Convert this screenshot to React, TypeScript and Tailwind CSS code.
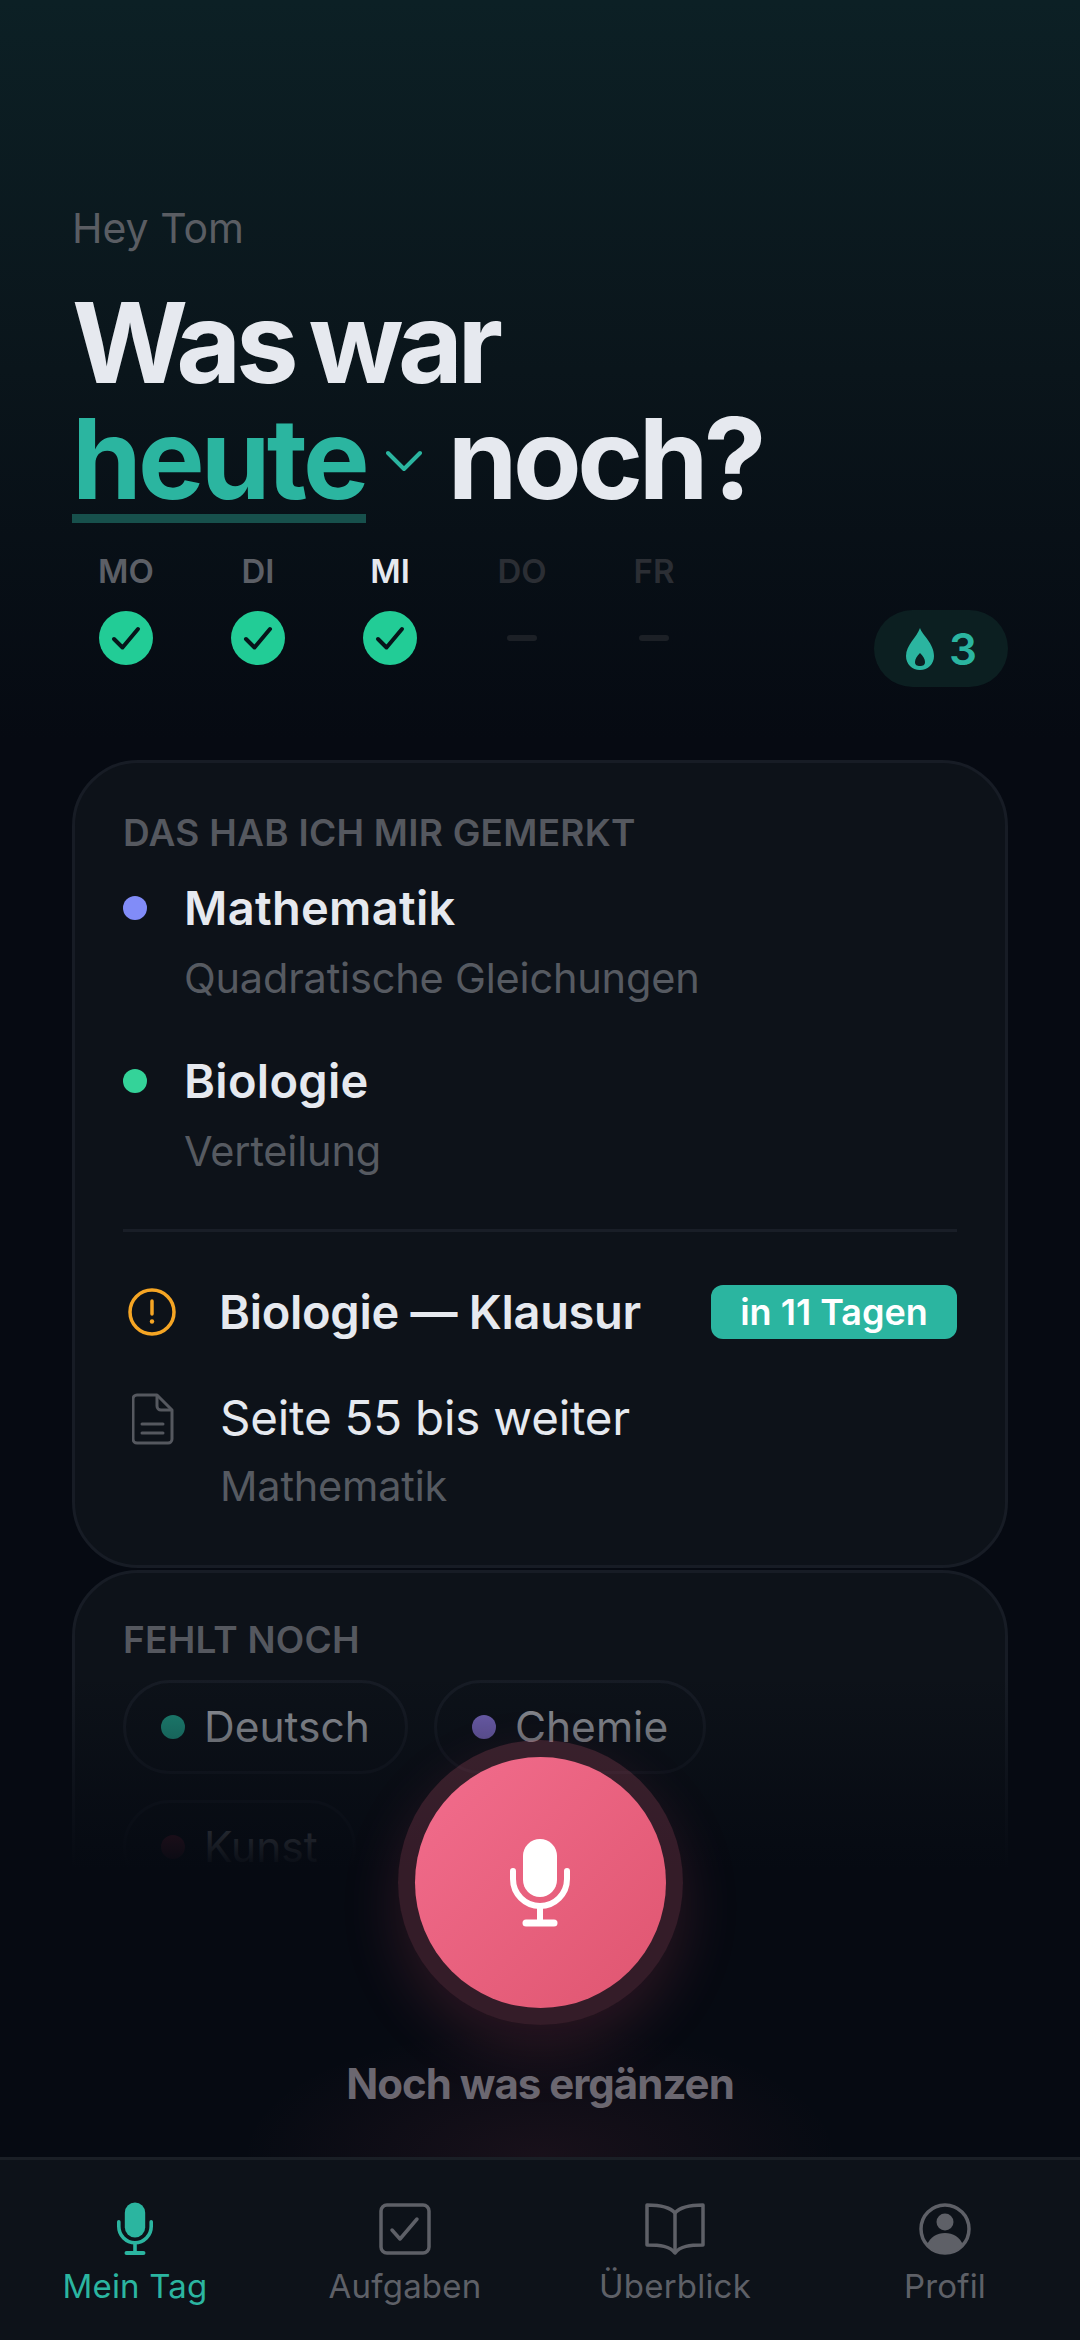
import type { ReactNode } from "react";

const FONT = "font-['Inter','Noto_Sans',sans-serif]";

const DAYS = [
  { label: "MO", state: "done" },
  { label: "DI", state: "done" },
  { label: "MI", state: "today" },
  { label: "DO", state: "open" },
  { label: "FR", state: "open" },
];

const MicIcon = ({ className }: { className: string }) => (
  <svg viewBox="0 0 60 88" className={className} fill="none">
    <rect x="13" y="0" width="34" height="58" rx="17" fill="currentColor" />
    <path d="M3 32v8a27 27 0 0 0 54 0v-8" stroke="currentColor" strokeWidth="6" strokeLinecap="round" />
    <path d="M30 67v16" stroke="currentColor" strokeWidth="6" />
    <path d="M16 84h28" stroke="currentColor" strokeWidth="7" strokeLinecap="round" />
  </svg>
);

const CheckBadge = () => (
  <svg viewBox="0 0 54 54" className="w-[54px] h-[54px]">
    <circle cx="27" cy="27" r="27" fill="#22cc96" />
    <path d="M15 28l8.500 8.500L39 18" fill="none" stroke="#07141a" strokeWidth="4" strokeLinecap="round" strokeLinejoin="round" />
  </svg>
);

const Subject = ({ dot, title, sub }: { dot: string; title: string; sub: string }) => (
  <div className="flex">
    <div className="w-[61px] h-[62px] flex items-center">
      <span className={`w-6 h-6 rounded-full ${dot}`} />
    </div>
    <div>
      <div className="h-[62px] leading-[62px] text-[47px] font-semibold text-[#e6e9ef] tracking-[0.3px]">{title}</div>
      <div className="mt-2 h-[62px] leading-[62px] text-[41.500px] text-[#565a61] tracking-[-0.2px]">{sub}</div>
    </div>
  </div>
);

const Chip = ({ dot, text, textColor }: { dot: string; text: string; textColor: string }) => (
  <div className="h-[94px] px-[35px] rounded-full border-[3px] border-[#171c25] flex items-center gap-[19px]">
    <span className={`w-6 h-6 rounded-full ${dot}`} />
    <span className={`text-[42.500px] ${textColor}`}>{text}</span>
  </div>
);

const NavItem = ({ icon, label, active }: { icon: ReactNode; label: string; active?: boolean }) => (
  <div className={`flex flex-col items-center ${active ? "text-[#2bb5a0]" : "text-[#5e6067]"}`}>
    <div className="h-[54px] flex items-center justify-center">{icon}</div>
    <span className="mt-[10px] text-[33px] leading-[40px] tracking-[0.2px]">{label}</span>
  </div>
);

export default function App() {
  return (
    <div className={`w-full h-[2340px] flex flex-col overflow-hidden bg-[#060a12] ${FONT}`}>
      <main className="relative flex-1 min-h-0 overflow-hidden px-[72px] pt-[200px] bg-gradient-to-b from-[#0c2025] via-[#0a151b] via-50% to-[#060a12] bg-[length:100%_740px] bg-no-repeat">
        <p className="text-[41px] leading-[56px] text-[#5a5d63]">Hey Tom</p>

        <h1 className="mt-[28px] text-[112px] leading-[116px] font-bold tracking-[-5px] text-[#e6e9ef]">
          <div className="tracking-[-5.400px] [word-spacing:-6px]">Was war</div>
          <div className="flex items-start">
            <span className="relative text-[#2bb5a0] tracking-[-3.800px]">
              heute
              <span className="absolute left-0 right-0 top-[114px] h-[9px] bg-[#17504c]" />
            </span>
            <svg viewBox="0 0 36 22" className="w-9 h-[22px] ml-5 mt-[50px]" fill="none">
              <path d="M2 3l16 16L34 3" stroke="#2bb5a0" strokeWidth="4" strokeLinecap="round" strokeLinejoin="round" />
            </svg>
            <span className="ml-[26px] tracking-[-4.500px]">noch?</span>
          </div>
        </h1>

        <div className="mt-[35px] flex items-start justify-between">
          <div className="flex -ml-3">
            {DAYS.map((day) => (
              <div key={day.label} className="w-[132px] flex flex-col items-center">
                <span
                  className={`text-[33px] leading-[40px] font-semibold ${
                    day.state === "today" ? "text-[#e6e9ef]" : day.state === "done" ? "text-[#5c5f66]" : "text-[#2b2e34]"
                  }`}
                >
                  {day.label}
                </span>
                <div className="mt-5 h-[54px] flex items-center justify-center">
                  {day.state === "open" ? <span className="w-[30px] h-1.5 rounded-full bg-[#1c2026]" /> : <CheckBadge />}
                </div>
              </div>
            ))}
          </div>
          <div className="mt-[59px] w-[134px] h-[77px] rounded-full bg-[#0c1f21] flex items-center justify-center gap-[14px] text-[#2bb5a0]">
            <svg viewBox="0 0 30 42" className="w-[30px] h-[42px]">
              <path
                fill="currentColor"
                fillRule="evenodd"
                d="M15 0c2 7 14 15 14 28 0 8-6 14-14 14S1 36 1 28C1 17 12 9 15 0zm0 25c-3 3-5 6-5 9 0 3 2 4 5 4s5-1 5-4c0-3-2-6-5-9z"
              />
            </svg>
            <span className="text-[44px] font-semibold">3</span>
          </div>
        </div>

        <section className="mt-[73px] h-[808px] rounded-[66px] border-[3px] border-[#171c25] bg-[#0d1219] px-[48px] pt-[47px]">
          <h2 className="text-[37px] leading-[46px] font-semibold text-[#55585f] tracking-[0.25px]">DAS HAB ICH MIR GEMERKT</h2>
          <div className="mt-[21px] flex flex-col gap-[41px]">
            <Subject dot="bg-[#818cf8]" title="Mathematik" sub="Quadratische Gleichungen" />
            <Subject dot="bg-[#34d399]" title="Biologie" sub="Verteilung" />
          </div>
          <div className="mt-[47px] h-[3px] bg-[#191e27]" />
          <div className="mt-[52px] flex items-center justify-between h-[56px]">
            <div className="flex items-center">
              <svg viewBox="0 0 48 48" className="w-12 h-12 ml-[5px]" fill="none">
                <circle cx="24" cy="24" r="22" stroke="#f5a524" strokeWidth="3.500" />
                <path d="M24 13v13" stroke="#f5a524" strokeWidth="3.500" strokeLinecap="round" />
                <circle cx="24" cy="33.500" r="2.200" fill="#f5a524" />
              </svg>
              <span className="ml-[43px] text-[47px] font-semibold text-[#e6e9ef] tracking-[-0.3px]">Biologie — Klausur</span>
            </div>
            <span className="w-[246px] h-[54px] rounded-xl bg-[#2bb5a0] flex items-center justify-center text-[36px] font-semibold text-white">
              in 11 Tagen
            </span>
          </div>
          <div className="mt-[53px] flex">
            <svg viewBox="0 0 42 52" className="w-[42px] h-[52px] ml-[9px]" fill="none" stroke="#55585f" strokeWidth="3">
              <path d="M5 2h20l15 15v29a4 4 0 0 1-4 4H5a4 4 0 0 1-4-4V6a4 4 0 0 1 4-4z" strokeLinejoin="round" />
              <path d="M25 2v11a4 4 0 0 0 4 4h11" />
              <path d="M10 31h21M10 40h21" strokeLinecap="round" />
            </svg>
            <div className="ml-[46px] -mt-[6px]">
              <div className="text-[47.500px] leading-[62px] text-[#e6e9ef] tracking-[-0.2px]">Seite 55 bis weiter</div>
              <div className="mt-1.5 text-[41.500px] leading-[62px] text-[#565a61] tracking-[-0.2px]">Mathematik</div>
            </div>
          </div>
        </section>

        <section className="mt-[2px] h-[500px] rounded-[66px] border-[3px] border-[#171c25] bg-[#0d1219] px-[48px] pt-[44px]">
          <h2 className="text-[37px] leading-[46px] font-semibold text-[#55585f] tracking-[0.25px]">FEHLT NOCH</h2>
          <div className="mt-[17px] max-w-[700px] flex flex-wrap gap-[26px]">
            <Chip dot="bg-[#1f8f7d]" text="Deutsch" textColor="text-[#9a9da3]" />
            <Chip dot="bg-[#7c6bc4]" text="Chemie" textColor="text-[#9a9da3]" />
            <Chip dot="bg-[#7a2138]" text="Kunst" textColor="text-[#9a9da3]" />
          </div>
        </section>

        {/* voice button sits over the list and fades it out */}
        <div className="absolute inset-x-0 bottom-0 h-[480px] bg-gradient-to-b from-[#060a12]/0 via-[#060a12] via-40% to-[#060a12]" />
        <div className="absolute inset-x-0 bottom-0 h-[200px] bg-[radial-gradient(ellipse_300px_130px_at_50%_100%,rgba(240,90,120,0.08),transparent)]" />
        <div className="absolute left-1/2 -translate-x-1/2 top-[1740px] flex flex-col items-center w-[600px]">
          <div className="w-[285px] h-[285px] rounded-full bg-[#f06482]/20 shadow-[0_24px_60px_rgba(240,90,120,0.16)] flex items-center justify-center">
            <div className="w-[251px] h-[251px] rounded-full bg-gradient-to-br from-[#f26d8d] to-[#df5570] flex items-center justify-center text-white">
              <MicIcon className="w-[60px] h-[88px]" />
            </div>
          </div>
          <p className="mt-[33px] text-[42px] leading-[52px] font-bold tracking-[-1px] text-[#6b6770]">Noch was ergänzen</p>
        </div>
      </main>

      <nav className="h-[183px] shrink-0 border-t-[3px] border-[#1a1f26] bg-[#0d1219] grid grid-cols-4 pt-[42px]">
        <NavItem active label="Mein Tag" icon={<MicIcon className="w-9 h-[54px]" />} />
        <NavItem
          label="Aufgaben"
          icon={
            <svg viewBox="0 0 52 52" className="w-[52px] h-[52px]" fill="none" stroke="currentColor" strokeWidth="3.500">
              <rect x="2" y="2" width="48" height="48" rx="6" />
              <path d="M13 27l8 9 17-20" strokeLinecap="round" strokeLinejoin="round" />
            </svg>
          }
        />
        <NavItem
          label="Überblick"
          icon={
            <svg viewBox="0 0 60 52" className="w-[60px] h-[52px]" fill="none" stroke="currentColor" strokeWidth="3.500" strokeLinejoin="round">
              <path d="M30 10C25 4 15 2 2 2v40c13 0 23 1 28 8 5-7 15-8 28-8V2C45 2 35 4 30 10z" />
              <path d="M30 10v40" />
            </svg>
          }
        />
        <NavItem
          label="Profil"
          icon={
            <svg viewBox="0 0 52 52" className="w-[52px] h-[52px]" fill="none">
              <circle cx="26" cy="26" r="24" stroke="currentColor" strokeWidth="3.500" />
              <circle cx="26" cy="19" r="8.500" fill="currentColor" />
              <path d="M8 42c3-8 10-12 18-12s15 4 18 12a24 24 0 0 1-36 0z" fill="currentColor" />
            </svg>
          }
        />
      </nav>
    </div>
  );
}
